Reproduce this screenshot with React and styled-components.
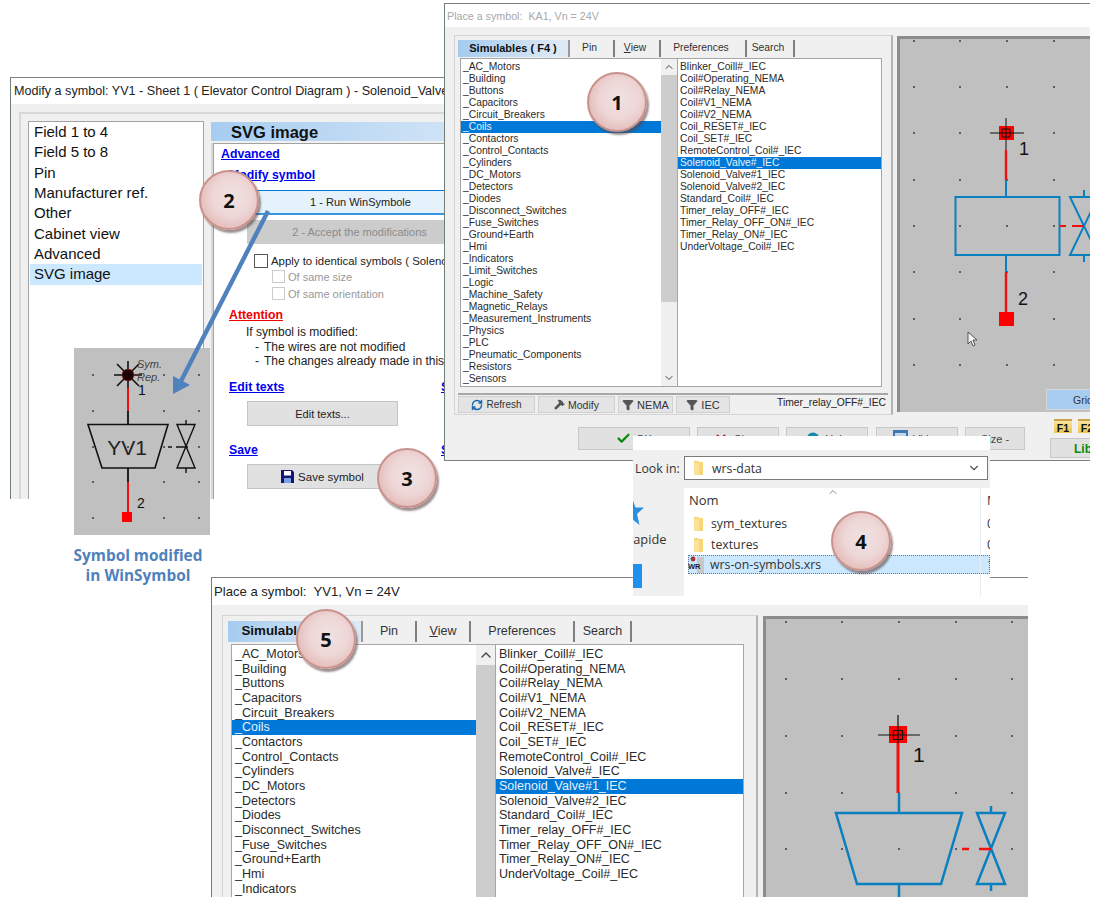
import React from 'react';
import styled, { createGlobalStyle } from 'styled-components';
import { Check, X, Filter, RefreshCw, ChevronUp, ChevronDown, Hammer } from 'lucide-react';

const Global = createGlobalStyle`
  html, body { margin: 0; padding: 0; background: #fff; }
  * { box-sizing: border-box; }
  #root { width: 1100px; height: 902px; }
`;

const UI = `"Liberation Sans", Arial, sans-serif`;
const SEGOE = `"Open Sans", "Noto Sans", sans-serif`;
const BLUE = '#0a7fbf';

const Stage = styled.div`
  position: relative;
  width: 1100px;
  height: 902px;
  overflow: hidden;
  background: #fff;
  font-family: ${UI};
  color: #1c1c1c;
`;

const Win = styled.section`
  position: absolute;
  left: ${p => p.$x}px;
  top: ${p => p.$y}px;
  width: ${p => p.$w}px;
  height: ${p => p.$h}px;
  z-index: ${p => p.$z};
  display: flex;
  flex-direction: column;
  overflow: hidden;
  background: #fff;
  border-left: 1px solid #6e7f78;
  border-top: 1px solid #808080;
  border-bottom: ${p => (p.$closed ? '1px solid #808080' : 'none')};
`;

const Title = styled.div`
  flex: none;
  height: ${p => p.$h}px;
  padding-left: ${p => p.$pad}px;
  display: flex;
  align-items: center;
  white-space: pre;
  overflow: hidden;
  font-size: ${p => p.$fs}px;
  color: ${p => p.$color};
  background: #fff;
`;

const Body = styled.div`
  flex: 1;
  min-height: 0;
  background: #f0f0f0;
  padding: ${p => p.$pt}px 0 0 ${p => p.$pl}px;
`;

/* ---------- window A ---------- */
const ModifyBody = styled.div`
  flex: 1;
  min-height: 0;
  background: #f0f0f0;
  padding: 8px 0 0 8px;
`;
const ModifyFrame = styled.div`
  height: 100%;
  display: flex;
  gap: 7px;
  padding: 7px 0 0 7px;
  background: #f0f0f0;
  border-top: 2px solid #d8d8d8;
  border-left: 2px solid #d8d8d8;
`;
const FieldList = styled.ul`
  flex: none;
  width: 176px;
  margin: 0;
  padding: 0 1px;
  list-style: none;
  background: #fff;
  border: 1px solid #a2a2a2;
  border-bottom: none;
  font-size: 15px;
  color: #111;
`;
const FieldItem = styled.li`
  height: 20.33px;
  line-height: 20.33px;
  padding-left: 4px;
  background: ${p => (p.$on ? '#cce8ff' : 'transparent')};
`;
const RightCol = styled.div`
  flex: 1;
  min-width: 0;
  padding-top: 1px;
  display: flex;
  flex-direction: column;
`;
const SectionHead = styled.div`
  flex: none;
  height: 19px;
  margin-right: -40px;
  padding-left: 20px;
  font-size: 16.5px;
  line-height: 20px;
  font-weight: 700;
  color: #111;
  background: linear-gradient(90deg, #a6cdf0, #d6e6f7);
`;
const Panel = styled.div`
  flex: 1;
  margin: 2px -40px 0 2px;
  padding: 3px 0 0 8px;
  background: #fff;
  border-top: 1px solid #a2a2a2;
  border-left: 1px solid #a2a2a2;
  box-shadow: -2px 0 0 #d8d8d8;
`;
const Row = styled.div`
  margin-top: ${p => p.$mt || 0}px;
  margin-left: ${p => p.$ml || 0}px;
  white-space: nowrap;
`;
const LinkRow = styled(Row)`
  display: grid;
  grid-template-columns: 212px auto;
  height: 14px;
`;
const Heading = styled.a`
  display: block;
  font-size: 12.3px;
  line-height: 14px;
  font-weight: 700;
  text-decoration: underline;
  color: ${p => p.$color || '#0000f0'};
`;
const WideButton = styled.div`
  width: ${p => p.$w}px;
  height: ${p => p.$h}px;
  display: flex;
  align-items: center;
  justify-content: center;
  gap: 4px;
  font-size: ${p => p.$fs || 11}px;
  color: ${p => p.$color || '#222'};
  background: ${p => p.$bg || '#e1e1e1'};
  border: ${p => p.$border || '1px solid #c4c4c4'};
`;
const RunButton = styled(WideButton)`
  border-top: 1px solid #0078d7;
  border-bottom: 2px solid #3a96de;
`;
const Check1 = styled.label`
  display: flex;
  align-items: center;
  gap: ${p => p.$gap}px;
  height: ${p => p.$h}px;
  font-size: ${p => p.$fs}px;
  color: ${p => p.$color};
`;
const Box = styled.span`
  flex: none;
  display: block;
  width: ${p => p.$s}px;
  height: ${p => p.$s}px;
  background: #fff;
  border: 1px solid ${p => p.$color};
`;
const Note = styled(Row)`
  font-size: 12px;
  line-height: 14px;
  color: #222;
`;
const Dash = styled.span`
  display: inline-block;
  width: 9px;
`;

/* ---------- symbol picker ---------- */
const PickerRow = styled.div`
  display: flex;
  align-items: flex-start;
  gap: ${p => p.$gap}px;
`;
const Frame = styled.div`
  flex: none;
  width: ${p => p.$w}px;
  height: ${p => p.$h}px;
  padding: ${p => p.$pad}px 0 0 ${p => p.$pad2}px;
  background: #f0f0f0;
  border: 1px solid #d4d4d4;
  border-right: 2px solid #b4b4b4;
`;
const TabBar = styled.div`
  display: flex;
  height: ${p => p.$h}px;
  font-size: ${p => p.$fs}px;
`;
const Tab = styled.div`
  flex: none;
  width: ${p => p.$w}px;
  display: flex;
  align-items: center;
  justify-content: center;
  padding: 0 ${p => (p.$on ? 0 : p.$shift)}px 2px 0;
  white-space: nowrap;
  overflow: hidden;
  border-right: 2px solid ${p => (p.$on ? '#9a9a9a' : '#7f7f7f')};
  background: ${p => (p.$on ? 'linear-gradient(100deg, #a4cbef, #dde9f5 90%)' : '#f0f0f0')};
  font-size: ${p => (p.$on ? '1.07em' : '1em')};
  font-weight: ${p => (p.$on ? 700 : 400)};
  color: ${p => (p.$on ? '#111' : '#333')};
`;
const Lists = styled.div`
  display: flex;
  height: ${p => p.$h}px;
  margin: ${p => p.$mt}px 0 0 ${p => p.$ml}px;
  font-size: ${p => p.$fs}px;
`;
const ListBox = styled.ul`
  flex: none;
  width: ${p => p.$w}px;
  margin: 0;
  padding: ${p => p.$pt}px 0 0;
  list-style: none;
  background: #fff;
  border: 1px solid #a6a6a6;
  border-right: ${p => (p.$open ? 'none' : '1px solid #a6a6a6')};
  overflow: hidden;
`;
const ListItem = styled.li`
  height: ${p => p.$h}px;
  line-height: ${p => p.$h}px;
  padding-left: ${p => p.$pl}px;
  white-space: nowrap;
  background: ${p => (p.$on ? '#0078d7' : 'transparent')};
  color: ${p => (p.$on ? '#e6f2fb' : '#2a2a2a')};
`;
const Scroll = styled.div`
  flex: none;
  width: ${p => p.$w}px;
  display: flex;
  flex-direction: column;
  align-items: center;
  background: #f0f0f0;
  border-top: 1px solid #a6a6a6;
  border-bottom: 1px solid #a6a6a6;
  color: #444;
`;
const ScrollBtn = styled.div`
  flex: none;
  height: ${p => p.$h}px;
  display: flex;
  align-items: center;
  justify-content: center;
`;
const Thumb = styled.div`
  flex: none;
  width: 100%;
  height: ${p => p.$h}px;
  background: #cdcdcd;
`;
const Spacer = styled.div`
  flex: 1;
`;
const Toolbar = styled.div`
  display: flex;
  align-items: center;
  height: 20px;
  margin-top: 6px;
  padding-top: 1px;
  border-top: 2px solid #a8a8a8;
  margin-right: 3px;
  gap: 3px;
`;
const ToolButton = styled.div`
  flex: none;
  width: ${p => p.$w}px;
  height: 17px;
  display: flex;
  align-items: center;
  justify-content: center;
  gap: 3px;
  font-size: ${p => p.$fs}px;
  color: #333;
  background: #e4e4e4;
  border: 1px solid #d0d0d0;
`;
const Path = styled.div`
  margin: -5px 2px 0 auto;
  font-size: 10.3px;
  color: #222;
  white-space: nowrap;
`;
const Canvas = styled.div`
  position: relative;
  flex: none;
  width: ${p => p.$w}px;
  height: ${p => p.$h}px;
  margin-top: 1px;
  background: #c0c0c0;
  box-shadow: inset 3px 3px 0 #8c8c8c;
  overflow: hidden;
`;
const Drawing = styled.svg`
  display: block;
`;
const GridButton = styled.div`
  position: absolute;
  right: -2px;
  bottom: 2px;
  width: 46px;
  height: 21px;
  line-height: 21px;
  padding-left: 26px;
  font-size: 10.5px;
  color: #333;
  white-space: nowrap;
  overflow: hidden;
  background: #a8cdf0;
  border: 1px solid #d6d6d6;
`;
const ActionRow = styled.div`
  display: flex;
  align-items: flex-start;
  margin-top: 12px;
  padding-left: 124px;
`;
const Action = styled.div`
  flex: none;
  width: ${p => p.$w}px;
  height: 23px;
  margin-left: ${p => p.$ml || 0}px;
  display: flex;
  align-items: center;
  justify-content: center;
  gap: 5px;
  font-size: 11px;
  color: #444;
  background: #e1e1e1;
  border: 1px solid #c8c8c8;
`;
const Side = styled.div`
  flex: none;
  width: 60px;
  margin: -8px 0 0 25px;
  display: flex;
  flex-direction: column;
  gap: 5px;
`;
const FKeys = styled.div`
  display: flex;
  gap: 6px;
  padding-left: 4px;
`;
const FKey = styled.span`
  flex: none;
  width: 18px;
  height: 14px;
  font-size: 10.5px;
  font-weight: 700;
  line-height: 14px;
  text-align: center;
  color: #111;
  background: linear-gradient(#f8e39a, #eec64f);
  border-top: 2px solid #c9a24a;
`;
const LibButton = styled.div`
  width: 60px;
  height: 20px;
  padding-left: 23px;
  line-height: 20px;
  font-size: 12px;
  font-weight: 700;
  color: #0a8a0a;
  background: #e1e1e1;
  border: 1px solid #c8c8c8;
`;

/* ---------- file dialog ---------- */
const Dialog = styled.section`
  position: absolute;
  left: 633px;
  top: 436px;
  z-index: 4;
  width: 357px;
  height: 160px;
  display: flex;
  flex-direction: column;
  overflow: hidden;
  background: #fff;
  font-family: ${SEGOE};
  font-size: 12.3px;
  color: #333;
`;
const DialogTop = styled.div`
  flex: none;
  height: 14px;
  background: #fff;
`;
const LookRow = styled.div`
  flex: none;
  height: 38px;
  display: flex;
  align-items: center;
  padding: 0 0 2px 2px;
  background: #f0f0f0;
`;
const LookLabel = styled.span`
  flex: none;
  width: 49px;
  white-space: nowrap;
`;
const Select = styled.div`
  width: 304px;
  height: 24px;
  display: flex;
  align-items: center;
  gap: 8px;
  padding: 0 6px 0 8px;
  background: #fff;
  border: 1px solid #7a7a7a;
`;
const SelectName = styled.span`
  flex: 1;
`;
const DialogMain = styled.div`
  flex: 1;
  display: flex;
  min-height: 0;
`;
const Places = styled.aside`
  flex: none;
  width: 51px;
  display: flex;
  flex-direction: column;
  overflow: hidden;
  background: #f0f0f0;
`;
const PlaceLabel = styled.div`
  height: 18px;
  margin: 5px 0 0 -5px;
  white-space: nowrap;
  line-height: 18px;
  font-size: 12.8px;
`;
const PlaceTile = styled.div`
  width: 9px;
  height: 24px;
  margin-top: 16px;
  background: #1e90f0;
`;
const Files = styled.div`
  flex: 1;
  position: relative;
  min-width: 0;
  display: flex;
  flex-direction: column;
`;
const FileHead = styled.div`
  flex: none;
  height: 25px;
  line-height: 25px;
  padding-left: 5px;
  font-size: 13px;
`;
const SortMark = styled.span`
  position: absolute;
  left: 143px;
  top: -3px;
  color: #888;
`;
const FileRow = styled.div`
  flex: none;
  height: ${p => p.$h}px;
  display: flex;
  align-items: center;
  gap: ${p => (p.$sel ? 3 : 7)}px;
  margin-left: ${p => (p.$sel ? 4 : 0)}px;
  padding-left: ${p => (p.$sel ? 0 : 9)}px;
  white-space: nowrap;
  background: ${p => (p.$sel ? '#cce8ff' : 'transparent')};
  outline: ${p => (p.$sel ? '1px dotted #5b7a92' : 'none')};
  outline-offset: -1px;
`;
const Column2 = styled.div`
  position: absolute;
  left: 296px;
  top: 0;
  bottom: 0;
  width: 10px;
  padding-left: 6px;
  overflow: hidden;
  border-left: 1px solid #e6eef5;
`;
const Col2Cell = styled.div`
  height: ${p => p.$h}px;
  line-height: ${p => p.$h}px;
`;

/* ---------- annotations ---------- */
const Bubble = styled.div`
  position: absolute;
  left: ${p => p.$x - 30}px;
  top: ${p => p.$y - 30}px;
  z-index: 6;
  width: 60px;
  height: 60px;
  display: flex;
  align-items: center;
  justify-content: center;
  border-radius: 50%;
  font-family: ${SEGOE};
  font-size: 20px;
  font-weight: 700;
  color: #111;
  background: radial-gradient(circle at 55% 45%, #f0e2e2 0%, #eed6d6 45%, #e0b4b0 85%, #d49c97 100%);
  border: 2px solid #c9918c;
  box-shadow: 2px 3px 2px rgba(90, 70, 70, 0.6);
`;
const SymbolCard = styled.div`
  position: absolute;
  left: 74px;
  top: 348px;
  z-index: 3;
  width: 136px;
  height: 187px;
  background: #c0c0c0;
`;
const Caption = styled.div`
  position: absolute;
  left: 64px;
  top: 546px;
  z-index: 3;
  width: 148px;
  text-align: center;
  font-family: ${SEGOE};
  font-size: 15.4px;
  line-height: 20px;
  font-weight: 700;
  color: #4f81bd;
`;
const ArrowLayer = styled.svg`
  position: absolute;
  left: 0;
  top: 0;
  z-index: 5;
  pointer-events: none;
`;
const StarMark = styled.svg`
  display: block;
  flex: none;
  margin: 10px 0 0 -13px;
`;
const RowIcon = styled.svg`
  flex: none;
`;

const FolderIcon = () => (
  <RowIcon width="11" height="16" viewBox="0 0 11 16">
    <path d="M1 1h4l1 1h4v13H1z" fill="#f6d675" />
    <path d="M1 3h5v12H1z" fill="#fbe29a" />
  </RowIcon>
);

const Dots = ({ xs, ys }) =>
  xs.flatMap(x => ys.map(y => <rect key={`${x}-${y}`} x={x - 1} y={y - 1} width="2" height="2" fill="#5e5e5e" />));

const Valve = ({ x, top, bot, color, dash, w }) => (
  <g stroke={color} strokeWidth={w} fill="none">
    <path d={`M${x} ${top - 7}V${top}M${x} ${bot}V${bot + 7}`} />
    <path d={`M${x - 14} ${top}H${x + 14}L${x - 14} ${bot}H${x + 14}Z`} />
    <path d={dash} stroke="#f01010" />
  </g>
);

const DrawingB = () => (
  <Drawing width="193" height="376" viewBox="897 36 193 376">
    <Dots xs={[914, 960, 1007, 1054]} ys={[41, 87, 133, 180, 226, 272, 319, 365]} />
    <rect x="999" y="126" width="15" height="14" fill="#f00" />
    <path d="M990 133H1024M1006 118V152M1002 129h8v8h-8z" stroke="#111" strokeWidth="1" fill="none" />
    <path d="M1006 150V180M1006 272V312" stroke="#f01010" strokeWidth="2.4" />
    <path d="M1006 180V197M1006 255V272" stroke={BLUE} strokeWidth="2" />
    <rect x="955.5" y="197" width="104" height="58" fill="none" stroke={BLUE} strokeWidth="2" />
    <rect x="999" y="312" width="15" height="14" fill="#f00" />
    <text x="1019" y="155" fontFamily={UI} fontSize="18" fill="#111">1</text>
    <text x="1018" y="305" fontFamily={UI} fontSize="18" fill="#111">2</text>
    <Valve x={1084} top={197} bot={255} color={BLUE} w={2} dash="M1060 226h6M1072 226h12" />
    <path d="M968 332v12l3-3 2 5 2-1-2-5h4z" fill="#f4f4f4" stroke="#333" strokeWidth="0.8" />
  </Drawing>
);

const DrawingC = () => (
  <Drawing width="265" height="282" viewBox="763 616 265 282">
    <Dots xs={[786, 842, 899, 956, 1012]} ys={[622, 679, 736, 793, 849]} />
    <rect x="889" y="726" width="18" height="17" fill="#f00" />
    <path d="M878 735H920M898 715V756M893.500 730.500h9v9h-9z" stroke="#111" strokeWidth="1.2" fill="none" />
    <path d="M898 743V793" stroke="#f01010" strokeWidth="3" />
    <path d="M899 793V813M899 884V898" stroke={BLUE} strokeWidth="2.5" />
    <path d="M836 813H962L941 884H857Z" fill="none" stroke={BLUE} strokeWidth="2.5" />
    <text x="913" y="762" fontFamily={UI} fontSize="21" fill="#111">1</text>
    <Valve x={991} top={813} bot={884} color={BLUE} w={2.5} dash="M962 849h7M979 849h12" />
  </Drawing>
);

const DrawingSymbol = () => (
  <Drawing width="136" height="187" viewBox="74 348 136 187">
    <Dots xs={[93, 128, 164, 199]} ys={[375, 411, 447, 482, 518]} />
    <path d="M114 375H142M128 361V389M117 364L139 386M139 364L117 386" stroke="#111" strokeWidth="1.6" />
    <circle cx="128" cy="375" r="6" fill="#1c0404" stroke="#c01010" strokeWidth="1" strokeDasharray="1.500 1.500" />
    <text x="137" y="368" fontFamily={UI} fontSize="11" fontStyle="italic" fill="#444">Sym.</text>
    <text x="137" y="381" fontFamily={UI} fontSize="11" fontStyle="italic" fill="#444">Rep.</text>
    <text x="138" y="395" fontFamily={UI} fontSize="14" fill="#111">1</text>
    <path d="M128 388V411M128 482V512" stroke="#ee1010" strokeWidth="2" />
    <path d="M128 411V424M128 468V482" stroke="#111" strokeWidth="1.800" />
    <path d="M88 424.500H168L155 468H102Z" fill="none" stroke="#111" strokeWidth="1.600" />
    <text x="127" y="454.500" textAnchor="middle" fontFamily={UI} fontSize="21" fill="#222">YV1</text>
    <rect x="122" y="512" width="10" height="10" fill="#f00" />
    <text x="137" y="508" fontFamily={UI} fontSize="14" fill="#111">2</text>
    <path d="M186 420V424.500M186 468V473M177 424.500H195L177 468H195Z" fill="none" stroke="#111" strokeWidth="1.400" />
    <path d="M168 447h4M176 447h12" stroke="#111" strokeWidth="1.400" />
  </Drawing>
);

const LEFT = ['_AC_Motors', '_Building', '_Buttons', '_Capacitors', '_Circuit_Breakers', '_Coils', '_Contactors', '_Control_Contacts', '_Cylinders', '_DC_Motors', '_Detectors', '_Diodes', '_Disconnect_Switches', '_Fuse_Switches', '_Ground+Earth', '_Hmi', '_Indicators', '_Limit_Switches', '_Logic', '_Machine_Safety', '_Magnetic_Relays', '_Measurement_Instruments', '_Physics', '_PLC', '_Pneumatic_Components', '_Resistors', '_Sensors'];
const RIGHT = ['Blinker_Coill#_IEC', 'Coil#Operating_NEMA', 'Coil#Relay_NEMA', 'Coil#V1_NEMA', 'Coil#V2_NEMA', 'Coil_RESET#_IEC', 'Coil_SET#_IEC', 'RemoteControl_Coil#_IEC', 'Solenoid_Valve#_IEC', 'Solenoid_Valve#1_IEC', 'Solenoid_Valve#2_IEC', 'Standard_Coil#_IEC', 'Timer_relay_OFF#_IEC', 'Timer_Relay_OFF_ON#_IEC', 'Timer_Relay_ON#_IEC', 'UnderVoltage_Coil#_IEC'];
const FIELDS = ['Field 1 to 4', 'Field 5 to 8', 'Pin', 'Manufacturer ref.', 'Other', 'Cabinet view', 'Advanced', 'SVG image'];

const Picker = ({ m, selected, children }) => (
  <>
    <TabBar $h={m.tabH} $fs={m.fs}>
      <Tab $on $w={m.tabs[0]}>Simulables ( F4 )</Tab>
      <Tab $shift={m.shift} $w={m.tabs[1]}>Pin</Tab>
      <Tab $shift={m.shift} $w={m.tabs[2]}><u>V</u>iew</Tab>
      <Tab $shift={m.shift} $w={m.tabs[3]}>Preferences</Tab>
      <Tab $shift={m.shift} $w={m.tabs[4]}>Search</Tab>
    </TabBar>
    <Lists $h={m.listH} $mt={m.listMt} $ml={m.listMl} $fs={m.fs}>
      <ListBox $w={m.leftW} $pt={m.pt} $open>
        {LEFT.map(t => <ListItem key={t} $h={m.row} $pl={m.pl} $on={t === '_Coils'}>{t}</ListItem>)}
      </ListBox>
      <Scroll $w={m.scrollW}>
        <ScrollBtn $h={m.btnH}><ChevronUp size={m.btnH - 4} strokeWidth={2} /></ScrollBtn>
        <Thumb $h={m.thumbH} />
        <Spacer />
        <ScrollBtn $h={m.btnH}><ChevronDown size={m.btnH - 4} strokeWidth={2} /></ScrollBtn>
      </Scroll>
      <ListBox $w={m.rightW} $pt={m.pt}>
        {RIGHT.map(t => <ListItem key={t} $h={m.row} $pl={m.pl} $on={t === selected}>{t}</ListItem>)}
      </ListBox>
    </Lists>
    {children}
  </>
);

const metricsB = { tabH: 17, fs: 10.3, shift: 4, tabs: [112, 45, 46, 86, 48], listH: 329, listMt: 1, listMl: 2, leftW: 201, pt: 1.6, row: 12.03, pl: 2, scrollW: 16, btnH: 16, thumbH: 227, rightW: 205 };
const metricsC = { tabH: 21, fs: 12.5, shift: 0, tabs: [135, 54, 54, 104, 57], listH: 400, listMt: 2, listMl: 3, leftW: 245, pt: 2, row: 14.67, pl: 3, scrollW: 19, btnH: 20, thumbH: 380, rightW: 249 };

const Floppy = () => (
  <svg width="13" height="13" viewBox="0 0 13 13">
    <path d="M0 0h11l2 2v11H0z" fill="#14147a" />
    <rect x="3" y="1" width="7" height="4.500" fill="#fff" />
    <rect x="3" y="8" width="7" height="5" fill="#7fa0e0" />
  </svg>
);

const WrsIcon = () => (
  <RowIcon width="19" height="18" viewBox="0 0 19 18">
    <circle cx="5" cy="3" r="2.400" fill="#a33" />
    <rect x="9" y="1" width="7" height="16" fill="#c8c8c8" />
    <text x="0" y="12.500" fontFamily={UI} fontSize="7.500" fontWeight="700" fill="#222">WR</text>
  </RowIcon>
);

const HelpDot = () => (
  <svg width="14" height="14" viewBox="0 0 14 14"><circle cx="7" cy="7" r="6.500" fill="#158aa8" /></svg>
);
const VideoIcon = () => (
  <svg width="15" height="18" viewBox="0 0 15 18"><rect width="15" height="18" fill="#3f78b8" /><rect x="2" y="3" width="11" height="4" fill="#c4d6ea" /></svg>
);

export default function App() {
  return (
    <Stage>
      <Global />

      <Win $x={10} $y={77} $w={434} $h={422} $z={1}>
        <Title $h={26} $pad={3} $fs={12.6} $color="#222">Modify a symbol: YV1 - Sheet 1 ( Elevator Control Diagram ) - Solenoid_Valve#_IEC</Title>
        <ModifyBody>
          <ModifyFrame>
            <FieldList>
              {FIELDS.map(f => <FieldItem key={f} $on={f === 'SVG image'}>{f}</FieldItem>)}
            </FieldList>
            <RightCol>
              <SectionHead>SVG image</SectionHead>
              <Panel>
                <Row $ml={-1}><Heading>Advanced</Heading></Row>
                <Row $mt={7} $ml={7}><Heading>Modify symbol</Heading></Row>
                <Row $mt={8} $ml={26}>
                  <RunButton $w={225} $h={25} $bg="#e5f1fb" $border="none">1 - Run WinSymbole</RunButton>
                </Row>
                <Row $mt={5} $ml={25}>
                  <WideButton $w={225} $h={24} $bg="#cccccc" $border="none" $color="#8a8a8a">2 - Accept the modifications</WideButton>
                </Row>
                <Row $mt={10} $ml={32}>
                  <Check1 $gap={3} $h={14} $fs={11.4} $color="#222"><Box $s={14} $color="#555" />Apply to identical symbols ( Solenoid_Valve )</Check1>
                </Row>
                <Row $mt={2} $ml={50}>
                  <Check1 $gap={3} $h={13} $fs={11} $color="#999"><Box $s={13} $color="#ccc" />Of same size</Check1>
                </Row>
                <Row $mt={4} $ml={50}>
                  <Check1 $gap={3} $h={13} $fs={11} $color="#999"><Box $s={13} $color="#ccc" />Of same orientation</Check1>
                </Row>
                <Row $mt={8} $ml={7}><Heading $color="#f00000">Attention</Heading></Row>
                <Note $mt={3} $ml={24}>If symbol is modified:</Note>
                <Note $mt={1} $ml={33}><Dash>-</Dash>The wires are not modified</Note>
                <Note $ml={33}><Dash>-</Dash>The changes already made in this symbol</Note>
                <LinkRow $mt={12} $ml={7}><Heading>Edit texts</Heading><Heading>Sym</Heading></LinkRow>
                <Row $mt={7} $ml={25}><WideButton $w={151} $h={25}>Edit texts...</WideButton></Row>
                <LinkRow $mt={17} $ml={7}><Heading>Save</Heading><Heading>Sym</Heading></LinkRow>
                <Row $mt={7} $ml={25}><WideButton $w={151} $h={25} $fs={11.5}><Floppy />Save symbol</WideButton></Row>
              </Panel>
            </RightCol>
          </ModifyFrame>
        </ModifyBody>
      </Win>

      <Win $x={444} $y={3} $w={646} $h={458} $z={2} $closed>
        <Title $h={23} $pad={2} $fs={10.7} $color="#a8a8a8">{'Place a symbol:  KA1, Vn = 24V'}</Title>
        <Body $pt={8} $pl={9}>
          <PickerRow $gap={4}>
            <Frame $w={439} $h={380} $pad={4} $pad2={3}>
              <Picker m={metricsB} selected="Solenoid_Valve#_IEC">
                <Toolbar>
                  <ToolButton $w={77} $fs={10}><RefreshCw size={12} color="#1565b0" strokeWidth={3} />Refresh</ToolButton>
                  <ToolButton $w={77} $fs={10.5}><Hammer size={11} color="#444" fill="#555" />Modify</ToolButton>
                  <ToolButton $w={55} $fs={11}><Filter size={12} color="#555" fill="#555" />NEMA</ToolButton>
                  <ToolButton $w={54} $fs={11}><Filter size={12} color="#555" fill="#555" />IEC</ToolButton>
                  <Path>Timer_relay_OFF#_IEC</Path>
                </Toolbar>
              </Picker>
            </Frame>
            <Canvas $w={193} $h={376}>
              <DrawingB />
              <GridButton>Grid</GridButton>
            </Canvas>
          </PickerRow>
          <ActionRow>
            <Action $w={112}><Check size={15} color="#0a8a0a" strokeWidth={3.5} />OK</Action>
            <Action $w={82} $ml={7}><X size={14} color="#c02020" strokeWidth={3.5} />Close</Action>
            <Action $w={82} $ml={7}><HelpDot />Help</Action>
            <Action $w={82} $ml={8}><VideoIcon />Video</Action>
            <Action $w={60} $ml={7}>Size -</Action>
            <Side>
              <FKeys><FKey>F1</FKey><FKey>F2</FKey></FKeys>
              <LibButton>Lib</LibButton>
            </Side>
          </ActionRow>
        </Body>
      </Win>

      <SymbolCard><DrawingSymbol /></SymbolCard>
      <Caption>Symbol modified<br />in WinSymbol</Caption>

      <Dialog>
        <DialogTop />
        <LookRow>
          <LookLabel>Look in:</LookLabel>
          <Select>
            <FolderIcon />
            <SelectName>wrs-data</SelectName>
            <ChevronDown size={14} color="#555" />
          </Select>
        </LookRow>
        <DialogMain>
          <Places>
            <StarMark width="24" height="27" viewBox="0 0 24 27">
              <path d="M12 0l3.500 9.500H24l-7 6.500 2.500 11L12 21l-7.500 6L7 16 0 9.500h8.500z" fill="#2b8fe0" />
            </StarMark>
            <PlaceLabel>rapide</PlaceLabel>
            <PlaceTile />
          </Places>
          <Files>
            <FileHead>Nom</FileHead>
            <SortMark><ChevronUp size={12} /></SortMark>
            <FileRow $h={21}><FolderIcon />sym_textures</FileRow>
            <FileRow $h={21}><FolderIcon />textures</FileRow>
            <FileRow $h={19} $sel><WrsIcon />wrs-on-symbols.xrs</FileRow>
            <Column2>
              <Col2Cell $h={25}>M</Col2Cell>
              <Col2Cell $h={21}>0</Col2Cell>
              <Col2Cell $h={21}>0</Col2Cell>
              <Col2Cell $h={19}>1</Col2Cell>
            </Column2>
          </Files>
        </DialogMain>
      </Dialog>

      <Win $x={211} $y={577} $w={817} $h={320} $z={3}>
        <Title $h={27} $pad={2} $fs={13.1} $color="#222">{'Place a symbol:  YV1, Vn = 24V'}</Title>
        <Body $pt={10} $pl={10}>
          <PickerRow $gap={5}>
            <Frame $w={536} $h={400} $pad={5} $pad2={5}>
              <Picker m={metricsC} selected="Solenoid_Valve#1_IEC" />
            </Frame>
            <Canvas $w={265} $h={282}>
              <DrawingC />
            </Canvas>
          </PickerRow>
        </Body>
      </Win>

      <ArrowLayer width="1100" height="902" viewBox="0 0 1100 902">
        <path d="M268 211L181 381" stroke="#4f81bd" strokeWidth="4.4" />
        <path d="M173 394L173 376L190 385Z" fill="#4f81bd" />
      </ArrowLayer>

      <Bubble $x={617} $y={102}>1</Bubble>
      <Bubble $x={229} $y={200}>2</Bubble>
      <Bubble $x={407} $y={478}>3</Bubble>
      <Bubble $x={861} $y={541}>4</Bubble>
      <Bubble $x={326} $y={639}>5</Bubble>
    </Stage>
  );
}
